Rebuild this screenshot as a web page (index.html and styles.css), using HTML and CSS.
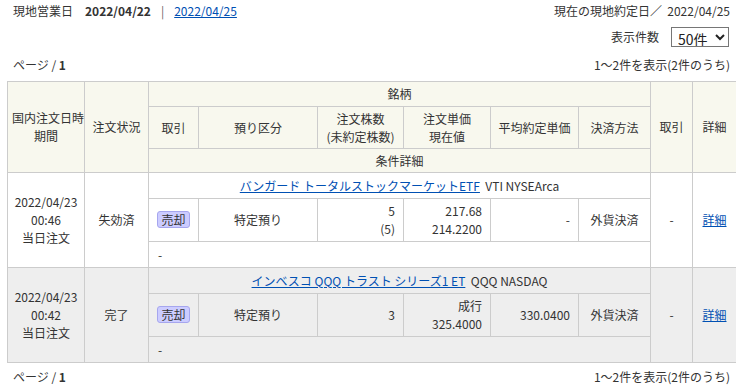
FILE: index.html
```html
<!DOCTYPE html>
<html lang="ja">
<head>
  <meta charset="UTF-8" />
  <title>注文照会</title>
  <meta name="viewport" content="width=device-width, initial-scale=1.0"/>
  <link rel="stylesheet" href="styles.css">
</head>
<body>

  <div class="info-bar">
    <div class="info-left">
      <span>現地営業日</span>
      <b class="date-now">2022/04/22</b>
      <span class="sep">|</span>
      <a href="#">2022/04/25</a>
    </div>
    <div class="info-right">現在の現地約定日／&nbsp;&nbsp;2022/04/25</div>
  </div>

  <div class="count-row">
    <label for="perPage">表示件数</label>
    <select id="perPage">
      <option>50件</option>
      <option>100件</option>
    </select>
  </div>

  <div class="page-row">
    <span>ページ / <b>1</b></span>
    <span>1～2件を表示(2件のうち)</span>
  </div>

  <table class="orders">
    <colgroup>
      <col style="width:77px">
      <col style="width:64px">
      <col style="width:50px">
      <col style="width:119px">
      <col style="width:86px">
      <col style="width:87px">
      <col style="width:88px">
      <col style="width:72px">
      <col style="width:42px">
      <col style="width:44px">
    </colgroup>
    <thead>
      <tr class="row-top">
        <th rowspan="3">国内注文日時<br>期間</th>
        <th rowspan="3">注文状況</th>
        <th colspan="6">銘柄</th>
        <th rowspan="3">取引</th>
        <th rowspan="3">詳細</th>
      </tr>
      <tr class="row-mid">
        <th>取引</th>
        <th>預り区分</th>
        <th>注文株数<br>(未約定株数)</th>
        <th>注文単価<br>現在値</th>
        <th>平均約定単価</th>
        <th>決済方法</th>
      </tr>
      <tr class="row-bottom">
        <th colspan="6">条件詳細</th>
      </tr>
    </thead>
    <tbody class="order">
      <tr class="row-top">
        <td rowspan="3">2022/04/23<br>00:46<br>当日注文</td>
        <td rowspan="3">失効済</td>
        <td colspan="6"><a href="#">バンガード トータルストックマーケットETF</a>&nbsp;&nbsp;VTI NYSEArca</td>
        <td rowspan="3">-</td>
        <td rowspan="3"><a href="#">詳細</a></td>
      </tr>
      <tr class="row-mid">
        <td><span class="badge">売却</span></td>
        <td>特定預り</td>
        <td class="num">5<br>(5)</td>
        <td class="num">217.68<br>214.2200</td>
        <td class="num">-</td>
        <td>外貨決済</td>
      </tr>
      <tr class="row-bottom">
        <td colspan="6" class="cond">-</td>
      </tr>
    </tbody>
    <tbody class="order done">
      <tr class="row-top">
        <td rowspan="3">2022/04/23<br>00:42<br>当日注文</td>
        <td rowspan="3">完了</td>
        <td colspan="6"><a href="#">インベスコ QQQ トラスト シリーズ1 ET</a>&nbsp;&nbsp;QQQ NASDAQ</td>
        <td rowspan="3">-</td>
        <td rowspan="3"><a href="#">詳細</a></td>
      </tr>
      <tr class="row-mid">
        <td><span class="badge">売却</span></td>
        <td>特定預り</td>
        <td class="num">3</td>
        <td class="num">成行<br>325.4000</td>
        <td class="num">330.0400</td>
        <td>外貨決済</td>
      </tr>
      <tr class="row-bottom">
        <td colspan="6" class="cond">-</td>
      </tr>
    </tbody>
  </table>

  <div class="page-row page-foot">
    <span>ページ / <b>1</b></span>
    <span>1～2件を表示(2件のうち)</span>
  </div>

</body>
</html>
```

FILE: styles.css
```css
body {
  font-family: "Noto Sans CJK JP", "Liberation Sans", sans-serif;
  font-size: 12px;
  line-height: 18px;
  color: #333;
  background: #fff;
  margin: 0;
  padding: 0;
  overflow-x: hidden;
}

a {
  color: #0050b3;
}

/* 上部の日付 */
.info-bar {
  display: flex;
  justify-content: space-between;
  padding: 2px 6px 0 13px;
}

.info-left {
  display: flex;
  gap: 10px;
}

.date-now {
  margin-left: 2px;
}

.sep {
  color: #666;
}

.count-row {
  display: flex;
  justify-content: flex-end;
  align-items: center;
  gap: 12px;
  margin-top: 7px;
  padding-right: 7px;
}

.count-row select {
  width: 58px;
  height: 20px;
  font-family: inherit;
  font-size: 14px;
  color: #222;
  border: 1px solid #767676;
  border-radius: 0;
  background: #fff;
  padding: 0 2px;
}

.page-row {
  display: flex;
  justify-content: space-between;
  padding: 0 6px 0 13px;
  margin-top: 9px;
}

.page-foot {
  margin-top: 5px;
}

/* 注文一覧テーブル */
.orders {
  width: 729px;
  margin: 7px 0 0 7px;
  border-collapse: collapse;
  table-layout: fixed;
}

.orders th,
.orders td {
  border: 1px solid #ccc;
  padding: 0 4px;
  text-align: center;
  font-weight: normal;
  white-space: nowrap;
}

.orders thead th {
  background: #f8f8ee;
}

.orders thead .row-top th {
  height: 24px;
}

.orders thead .row-mid th {
  height: 41px;
}

.orders thead .row-bottom th {
  height: 23px;
}

.orders tbody .row-top td {
  height: 25px;
}

.orders tbody .row-mid td {
  height: 42px;
}

.orders tbody .row-bottom td {
  height: 25px;
}

.orders .done td {
  background: #eee;
}

.orders td.num {
  text-align: right;
  padding-right: 8px;
}

.orders td.cond {
  text-align: left;
  padding-left: 9px;
}

.badge {
  display: inline-block;
  padding: 0 3px;
  line-height: 15px;
  background: #ccf;
  border: 1px solid #a6a6ee;
  border-radius: 3px;
}
```
